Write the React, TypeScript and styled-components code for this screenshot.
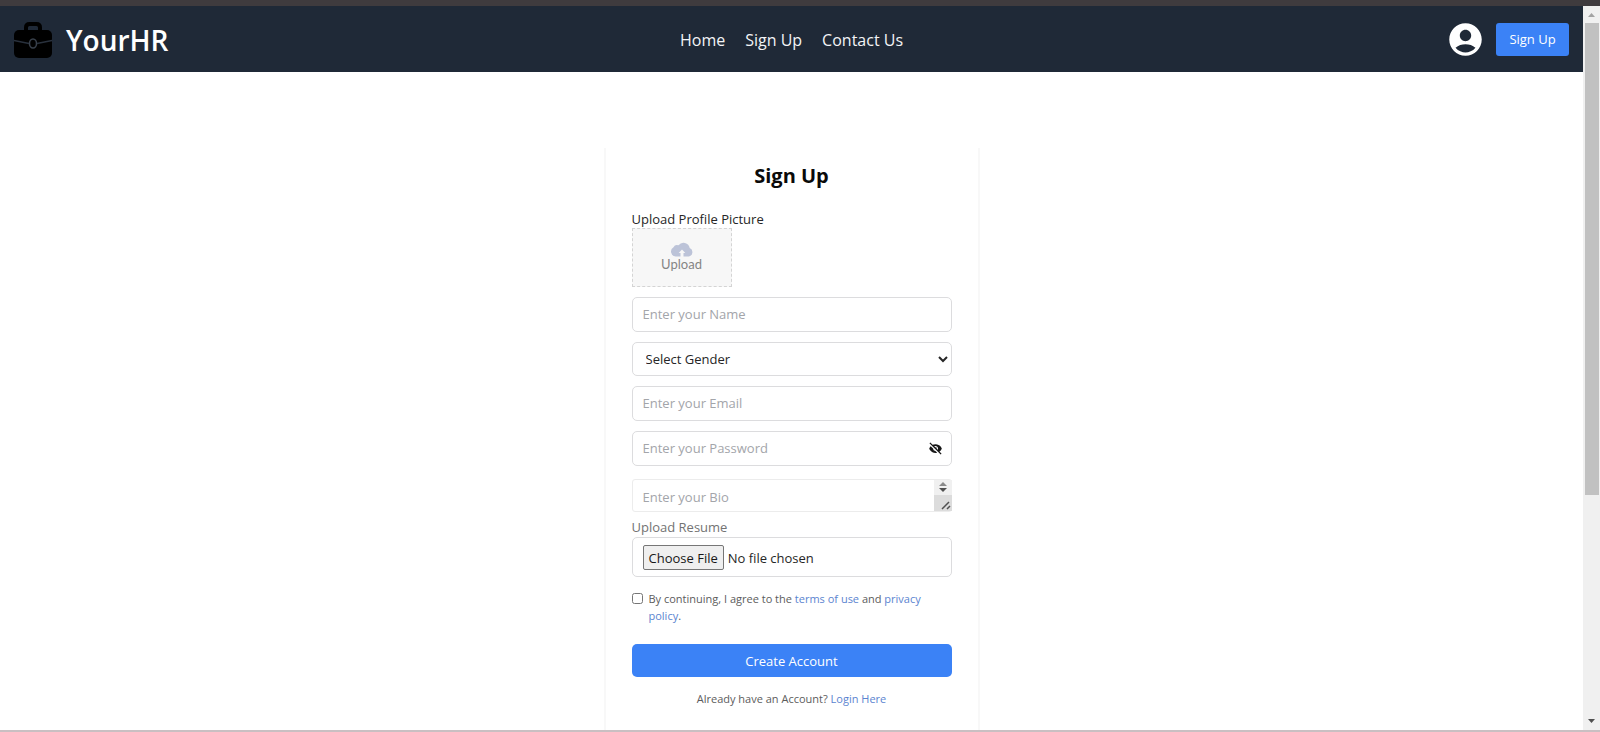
import React, { useState } from "react";
import styled, { createGlobalStyle } from "styled-components";
import { MdAccountCircle } from "react-icons/md";
import { BiSolidHide } from "react-icons/bi";

const GlobalStyle = createGlobalStyle`
  *, *::before, *::after { box-sizing: border-box; }
  body {
    margin: 0;
    background: #fff;
    color: #0a0a0a;
    font-family: "Open Sans", "Noto Sans", sans-serif;
    font-size: 13px;
    line-height: 20px;
  }
  button, input, select, textarea { font: inherit; margin: 0; }
  a { color: #5b84d0; text-decoration: none; }
`;

const Window = styled.div`
  display: flex;
  flex-direction: column;
  height: 100vh;
  overflow: hidden;
  border-top: 6px solid #3f3b3e;
  border-bottom: 2px solid #c9bfc2;
`;

const Viewport = styled.div`
  display: flex;
  flex: 1;
  min-height: 0;
`;

const Page = styled.div`
  display: flex;
  flex-direction: column;
  flex: 1;
  min-width: 0;
`;

const Header = styled.header`
  display: grid;
  grid-template-columns: 1fr auto 1fr;
  align-items: center;
  flex-shrink: 0;
  height: 66px;
  padding: 0 14px;
  background: #1f2937;
  color: #fff;
`;

const Brand = styled.a`
  display: flex;
  align-items: center;
  gap: 14px;
  padding-top: 2px;
  color: #fff;
  font-size: 28px;
  font-weight: 600;
  line-height: 36px;
`;

const Nav = styled.nav`
  display: flex;
  gap: 20px;
  padding-top: 2px;
`;

const NavLink = styled.a`
  color: #f3f4f6;
  font-size: 16px;
  font-weight: 500;
  line-height: 24px;
`;

const Account = styled.div`
  display: flex;
  align-items: center;
  justify-content: flex-end;
  gap: 11px;
`;

const Button = styled.button<{ $wide?: boolean }>`
  width: ${(p) => (p.$wide ? "100%" : "73px")};
  height: 33px;
  padding: 0;
  border: 0;
  border-radius: ${(p) => (p.$wide ? "5px" : "3px")};
  background: #3b82f6;
  color: #fff;
  cursor: pointer;
`;

const Main = styled.main`
  display: flex;
  flex: 1;
  justify-content: center;
  min-height: 0;
  padding-top: 76px;
`;

const Card = styled.form`
  width: 376px;
  padding: 14px 26px;
  border: solid #f8f8f8;
  border-width: 0 2px;
`;

const Title = styled.h1`
  margin: 0 0 20px;
  font-size: 20px;
  font-weight: 700;
  line-height: 28px;
  text-align: center;
`;

const Label = styled.label<{ $muted?: boolean }>`
  display: block;
  color: ${(p) => (p.$muted ? "#737373" : "#262626")};
  line-height: 18px;
`;

const UploadBox = styled.button`
  display: flex;
  flex-direction: column;
  align-items: center;
  justify-content: center;
  width: 100px;
  height: 59px;
  margin-bottom: 10px;
  padding: 0 0 2px;
  border: 1px dashed #d4d4d4;
  background: #f7f7f7;
  color: #858585;
  font-family: Lato, sans-serif;
  line-height: 14px;
  cursor: pointer;
`;

const fieldStyle = `
  display: block;
  width: 100%;
  height: 35px;
  padding: 0 10px;
  border: 1px solid #dcdcde;
  border-radius: 5px;
  background: #fff;
  color: #262626;
  &::placeholder { color: #a3a5aa; opacity: 1; }
`;

const Input = styled.input`
  ${fieldStyle}
  padding-bottom: 2px;
  margin-bottom: 10px;
`;

const Select = styled.select`
  ${fieldStyle}
  height: 34px;
  padding: 0 2px 0 9px;
  margin-bottom: 10px;
`;

const Password = styled.div`
  position: relative;
  margin-bottom: 13px;
`;

const Reveal = styled.button`
  position: absolute;
  top: 10px;
  right: 9px;
  display: flex;
  padding: 0;
  border: 0;
  background: none;
  color: #171717;
  cursor: pointer;
`;

const Bio = styled.div`
  position: relative;
  margin-bottom: 6px;
`;

const TextArea = styled.textarea`
  ${fieldStyle}
  height: 33px;
  padding: 7px 28px 4px 10px;
  border-color: #ececec;
  border-radius: 3px;
  resize: none;
  overflow: hidden;
`;

const BioScroll = styled.svg`
  position: absolute;
  top: 1px;
  right: 0;
`;

const FileInput = styled.input`
  ${fieldStyle}
  height: 40px;
  padding: 7px 10px;
  margin: 1px 0 13px;
  &::file-selector-button {
    height: 25px;
    margin: 0 4px 0 0;
    padding: 0 5px;
    border: 1px solid #767676;
    border-radius: 2px;
    background: #efefef;
    color: #171717;
    font: inherit;
  }
`;

const Terms = styled.div`
  display: flex;
  gap: 6px;
  margin-bottom: 20px;
  color: #5c5c5c;
  font-size: 11px;
  line-height: 17px;
`;

const Checkbox = styled.input`
  flex-shrink: 0;
  width: 11px;
  height: 11px;
  margin: 3px 0;
`;

const Footer = styled.p`
  margin: 13px 0 0;
  color: #5c5c5c;
  font-size: 11px;
  line-height: 18px;
  text-align: center;
`;

const Scrollbar = styled.div`
  display: flex;
  flex-direction: column;
  align-items: center;
  width: 17px;
  background: #f0f0f0;
`;

const Track = styled.div`
  display: flex;
  flex-direction: column;
  flex: 1;
  width: 14px;
  &::after { content: ""; flex: 6; }
`;

const Thumb = styled.div`
  flex: 13;
  background: #c1c1c1;
`;

const Briefcase = () => (
  <svg width="38" height="36" viewBox="0 0 38 36" aria-hidden="true">
    <path d="M12 9V5.500Q12 2 15.500 2H22.500Q26 2 26 5.500V9" fill="none" stroke="#000" strokeWidth="4" />
    <rect y="8" width="38" height="28" rx="5" fill="#000" />
    <path d="M0 18.500L15 21.500M23 21.500L38 18.500" stroke="#29313d" strokeWidth="1.300" />
    <ellipse cx="19" cy="21.500" rx="3.500" ry="4.500" fill="none" stroke="#39414c" strokeWidth="1.500" />
  </svg>
);

const Cloud = () => (
  <svg width="24" height="15" viewBox="0 0 24 15" aria-hidden="true">
    <path
      d="M5.500 14.500A5 5 0 0 1 3.500 5.200 4 4 0 0 1 8.500 3.300 6.300 6.300 0 0 1 19.700 6 4.500 4.500 0 0 1 19 14.500H13.500V11H15.300L12 7.500 8.700 11H10.500V14.500Z"
      fill="#bcc3d8"
    />
  </svg>
);

const Arrow = ({ up }: { up?: boolean }) => (
  <svg width="17" height="17" viewBox="0 0 17 17" aria-hidden="true">
    <path d={up ? "M5 11L8.500 7L12 11Z" : "M5 6L8.500 10L12 6Z"} fill={up ? "#a3a3a3" : "#505050"} />
  </svg>
);

export default function App() {
  const [visible, setVisible] = useState(false);
  return (
    <Window>
      <GlobalStyle />
      <Viewport>
        <Page>
          <Header>
            <Brand href="#"><Briefcase />YourHR</Brand>
            <Nav>
              <NavLink href="#">Home</NavLink>
              <NavLink href="#">Sign Up</NavLink>
              <NavLink href="#">Contact Us</NavLink>
            </Nav>
            <Account>
              <MdAccountCircle size={39} aria-hidden="true" />
              <Button type="button">Sign Up</Button>
            </Account>
          </Header>
          <Main>
            <Card onSubmit={(e) => e.preventDefault()}>
              <Title>Sign Up</Title>
              <Label htmlFor="picture">Upload Profile Picture</Label>
              <UploadBox id="picture" type="button"><Cloud />Upload</UploadBox>
              <Input type="text" placeholder="Enter your Name" aria-label="Name" />
              <Select aria-label="Gender" defaultValue="">
                <option value="">Select Gender</option>
                <option>Male</option>
                <option>Female</option>
              </Select>
              <Input type="email" placeholder="Enter your Email" aria-label="Email" />
              <Password>
                <Input type={visible ? "text" : "password"} placeholder="Enter your Password" aria-label="Password" />
                <Reveal type="button" aria-label="Show password" onClick={() => setVisible(!visible)}>
                  <BiSolidHide size={15} />
                </Reveal>
              </Password>
              <Bio>
                <TextArea rows={1} placeholder="Enter your Bio" aria-label="Bio" />
                <BioScroll width="18" height="31" viewBox="0 0 18 31" aria-hidden="true">
                  <path d="M0 0H18V15H0Z" fill="#f0f0f0" />
                  <path d="M0 15H18V31H0Z" fill="#dcdcdc" />
                  <path d="M5 6L9 2L13 6Z" fill="#8a8a8a" />
                  <path d="M5 8L9 12L13 8Z" fill="#505050" />
                  <path d="M8 29L15 22M13 29L16 26" stroke="#505050" strokeWidth="1.500" />
                </BioScroll>
              </Bio>
              <Label htmlFor="resume" $muted>Upload Resume</Label>
              <FileInput id="resume" type="file" />
              <Terms>
                <Checkbox id="terms" type="checkbox" />
                <label htmlFor="terms">
                  By continuing, I agree to the <a href="#">terms of use</a> and <a href="#">privacy policy</a>.
                </label>
              </Terms>
              <Button type="submit" $wide>Create Account</Button>
              <Footer>Already have an Account? <a href="#">Login Here</a></Footer>
            </Card>
          </Main>
        </Page>
        <Scrollbar aria-hidden="true">
          <Arrow up />
          <Track><Thumb /></Track>
          <Arrow />
        </Scrollbar>
      </Viewport>
    </Window>
  );
}
